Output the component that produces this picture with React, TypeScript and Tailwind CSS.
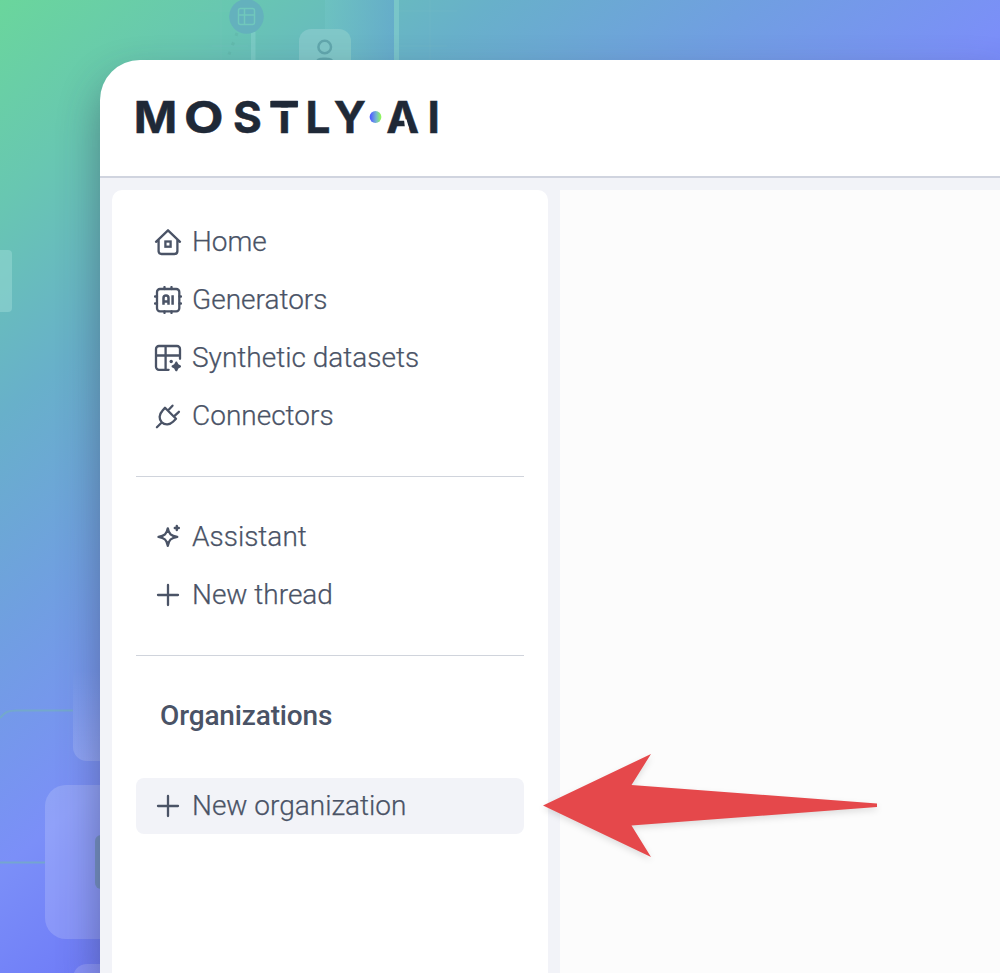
import React from "react";

type IconProps = { children: React.ReactNode };

function Icon({ children }: IconProps) {
  return (
    <svg className="size-7 shrink-0" viewBox="0 0 28 28" fill="none" stroke="currentColor" strokeWidth="2.3" strokeLinecap="round" strokeLinejoin="round">
      {children}
    </svg>
  );
}

const HomeIcon = () => (
  <Icon>
    <path d="M2 13.800 14 2.300l12 11.500M4.600 12v11.400A3 3 0 0 0 7.600 26h12.800a3 3 0 0 0 3-2.900V12" />
    <rect x="11.400" y="13.500" width="5.200" height="5.200" strokeLinejoin="miter" />
  </Icon>
);

const GeneratorIcon = () => (
  <Icon>
    <rect x="3" y="3" width="22.3" height="22.3" rx="3" />
    <path d="M10.5 1v2M17.5 1v2M10.5 25.5v1.5M17.5 25.5v1.5M1 10.5h2M1 17.5h2M25.5 10.5H27M25.5 17.5H27" />
    <path d="M9.5 18.700v-6.700a2.500 2.500 0 0 1 5 0v6.700M9.500 15.500h5M18.600 9.300v9.400" strokeWidth="2.500" strokeLinecap="butt" />
  </Icon>
);

const DatasetIcon = () => (
  <Icon>
    <path d="M14.6 25.8H5a3 3 0 0 1-3-3V5a3 3 0 0 1 3-3h18a3 3 0 0 1 3 3v9.8M2 11.500h24M11.600 2v23.800" />
    <circle cx="17.2" cy="17.5" r="1.7" fill="currentColor" stroke="none" />
    <path d="M22.3 18.700c.6 2.300 1.200 3 3.600 3.700-2.400.7-3 1.400-3.600 3.700-.6-2.300-1.200-3-3.600-3.700 2.400-.7 3-1.400 3.600-3.700Z" fill="currentColor" />
  </Icon>
);

const PlugIcon = () => (
  <Icon>
    <path d="m2.900 25.300 4.800-4.800M11 5.800l11 11-3 3c-3.200 3.200-8.100 3.500-11.200.500s-2.800-8 .4-11.200ZM14 8.500l4.500-4.800M20 14.300l4.900-4.500" />
  </Icon>
);

const SparkleIcon = () => (
  <Icon>
    <path d="M13.800 5.300c1 5.600 3.200 7.600 9.500 8.600-6.300 1-8.500 3-9.500 8.900-1-5.900-3.300-7.900-9.300-8.900 6-1 8.300-3 9.300-8.600Z" />
    <path d="M22.800 3v4M20.800 5h4" strokeWidth="2.400" />
  </Icon>
);

const PlusIcon = () => (
  <Icon>
    <path d="M14 4v20M4 14h20" />
  </Icon>
);

type RowProps = { icon: React.ReactNode; label: string; active?: boolean };

function NavRow({ icon, label, active }: RowProps) {
  return (
    <a className={`flex h-14 items-center gap-2.5 rounded-lg pl-[18px] text-[28px] font-light ${active ? "bg-[#f2f3f8]" : ""}`}>
      {icon}
      <span className="leading-8 whitespace-nowrap [-webkit-text-stroke:0.25px_#4a5366]">{label}</span>
    </a>
  );
}

function Logo() {
  return (
    <svg className="ml-[26px] h-[70px] w-[330px] overflow-visible" viewBox="126 83 330 70" aria-label="MOSTLY AI">
      <defs>
        <linearGradient id="dot">
          <stop offset="0.1" stopColor="#5361ff" />
          <stop offset="0.55" stopColor="#74b5d2" />
          <stop offset="0.95" stopColor="#91f85c" />
        </linearGradient>
      </defs>
      <text y="133" fill="#1f2937" stroke="#1f2937" strokeWidth="0.5" fontFamily="Inter, sans-serif" fontWeight="700" fontSize="44">
        <tspan x="133.700" textLength="43.500" lengthAdjust="spacingAndGlyphs">M</tspan>
        <tspan x="184" textLength="39.500" lengthAdjust="spacingAndGlyphs">O</tspan>
        <tspan x="233 269.700 305.600 333.800 386.300 427.500">STLYAI</tspan>
      </text>
      <path d="M268 107.600h33v3.400h-33zM404 119.500h2.500l2.700 9h-4.200z" fill="#fff" />
      <path d="M270.300 101h27.400v6.500h-27.400z" fill="#1f2937" />
      <circle cx="375.500" cy="117" r="5.900" fill="url(#dot)" />
    </svg>
  );
}

function Backdrop() {
  return (
    <svg className="absolute inset-0 h-[973px] w-[1000px]" viewBox="0 0 1000 973" fill="none">
      <defs>
        <linearGradient id="fade" x1="0" y1="0" x2="0" y2="1">
          <stop stopColor="#fff" stopOpacity="0" />
          <stop offset="1" stopColor="#fff" stopOpacity="0.16" />
        </linearGradient>
        <linearGradient id="band">
          <stop stopColor="#70c4c4" stopOpacity="0.55" />
          <stop offset="1" stopColor="#64a6cf" stopOpacity="0.6" />
        </linearGradient>
      </defs>
      <path d="M325 0h69v60h-69z" fill="url(#band)" />
      <path d="M394 0h5v60h-5zM251 32h4.500v28H251z" fill="#8ad3d0" fillOpacity="0.5" />
      <path d="M195 11h40M212 46h36M399 11h58M399 46h48M221 0v60M430 0v60" stroke="#8bcfcb" strokeOpacity="0.14" />
      <path d="m237 33-10 27" stroke="#529b91" strokeOpacity="0.2" strokeWidth="3" strokeDasharray="3 7" />
      <circle cx="246.500" cy="16.500" r="17.300" fill="#64b1bd" />
      <rect x="238.500" y="8.500" width="16" height="16" rx="2" stroke="#70c8bc" strokeWidth="1.500" />
      <path d="M238.500 15h16M244.500 8.500v16" stroke="#70c8bc" strokeWidth="1.500" />
      <rect x="299" y="29" width="52" height="50" rx="12" fill="#80c7c8" />
      <circle cx="324.700" cy="47" r="6.300" stroke="#61a7ad" strokeWidth="2.500" />
      <path d="M316 61c1-3 4-3.500 8.500-3.500s8 .5 9 3.500" fill="#61a7ad" />
      <path d="M0 250h8a4 4 0 0 1 4 4v54a4 4 0 0 1-4 4H0z" fill="#a4dfdc" fillOpacity="0.42" />
      <path d="M0 718c5-6 8-7.500 17-7.500h56M0 862.500h45" stroke="#73adc2" strokeWidth="2" strokeOpacity="0.75" />
      <path d="M73 670h40v91H87a14 14 0 0 1-14-14z" fill="url(#fade)" />
      <rect x="45" y="785" width="100" height="154" rx="21" fill="#fff" fillOpacity="0.16" />
      <rect x="95" y="835" width="30" height="54" rx="6" fill="#6f8fb8" fillOpacity="0.8" />
      <rect x="73" y="964" width="60" height="40" rx="14" fill="#fff" fillOpacity="0.16" />
    </svg>
  );
}

export default function App() {
  return (
    <div className="relative h-[973px] w-[1000px] overflow-hidden bg-[linear-gradient(140deg,#6ad69c_0%,#68c7b1_11%,#68b0ca_23%,#709fe1_35%,#7b8ff8_48%,#7281f8_55%,#6b73f6_62%)] pt-[60px] pl-[100px] font-['Roboto',sans-serif] text-[#4a5366]">
      <Backdrop />
      <div className="relative flex h-[913px] w-[900px] flex-col overflow-hidden rounded-tl-[40px] bg-white shadow-[0_20px_40px_rgba(45,50,65,0.42)]">
        <header className="flex h-[118px] shrink-0 items-center border-b-2 border-[#d0d4df]">
          <Logo />
        </header>
        <div className="flex flex-1 gap-3 bg-[#f2f3f8] pt-3 pl-3">
          <aside className="w-[436px] shrink-0 rounded-t-[10px] bg-white p-6">
            <nav className="flex flex-col gap-0.5">
              <NavRow icon={<HomeIcon />} label="Home" />
              <NavRow icon={<GeneratorIcon />} label="Generators" />
              <NavRow icon={<DatasetIcon />} label="Synthetic datasets" />
              <NavRow icon={<PlugIcon />} label="Connectors" />
            </nav>
            <hr className="my-8 border-[#d0d4dc]" />
            <nav className="flex flex-col gap-0.5">
              <NavRow icon={<SparkleIcon />} label="Assistant" />
              <NavRow icon={<PlusIcon />} label="New thread" />
            </nav>
            <hr className="my-8 border-[#d0d4dc]" />
            <h2 className="mb-[34px] flex h-14 items-center pl-6 text-[28px] font-medium tracking-[-0.14px]">Organizations</h2>
            <NavRow icon={<PlusIcon />} label="New organization" active />
          </aside>
          <main className="flex-1 bg-[#fcfcfc]" />
        </div>
      </div>
      <svg className="absolute top-[745px] left-[535px] h-[125px] w-[350px] drop-shadow-[0_3px_3px_rgba(0,0,0,0.12)]" viewBox="535 745 350 125">
        <path d="M543 805.500 651 754l-19.500 31L877 803.500v3.500L631.500 825.500 651 857Z" fill="#e5484b" />
      </svg>
    </div>
  );
}
